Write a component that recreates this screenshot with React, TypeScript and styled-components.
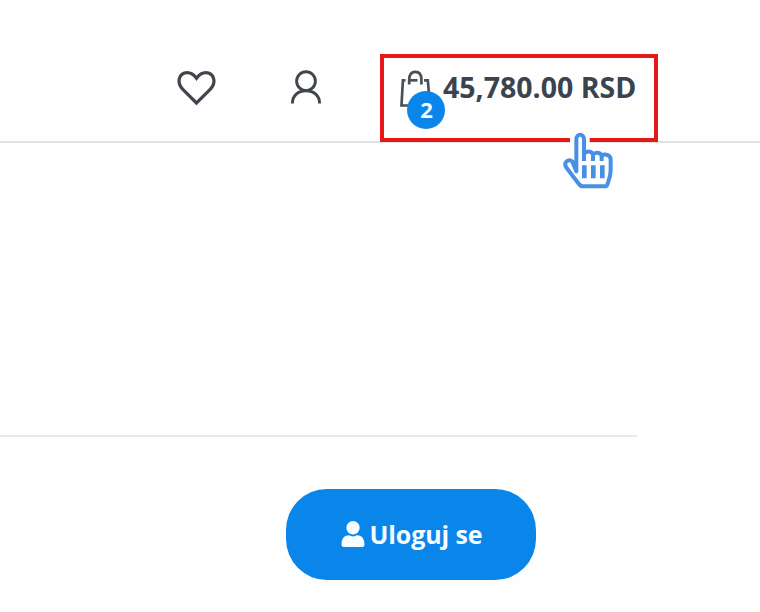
import React from 'react';
import styled, { createGlobalStyle } from 'styled-components';

const GlobalStyle = createGlobalStyle`
  body { margin: 0; background: #fefefe; font-family: "Open Sans", "Noto Sans", sans-serif; }
  * { box-sizing: border-box; }
`;

const Page = styled.div`
  width: 760px;
  height: 612px;
  overflow: hidden;
`;

const Header = styled.header`
  height: 143px;
  padding: 54px 102px 0 177px;
  display: flex;
  align-items: flex-start;
  border-bottom: 2px solid #e2e2e2;
`;

const IconLink = styled.a<{ $gap: number }>`
  display: block;
  margin: 15px ${(p) => p.$gap}px 0 0;
  height: 38px;
  svg { display: block; }
`;

const Cart = styled.div`
  position: relative;
  width: 278px;
  height: 88px;
  margin-left: auto;
  padding: 12px 0 0 16px;
  display: flex;
  align-items: flex-start;
  border: 4px solid #e61717;
  background: #fefefe;
`;

const BagIcon = styled.svg`
  flex: none;
  display: block;
`;

const Badge = styled.span`
  position: absolute;
  left: 23px;
  top: 33px;
  width: 38px;
  height: 38px;
  border-radius: 50%;
  background: #0a86ea;
  color: #f4fbff;
  font-size: 22px;
  font-weight: 700;
  line-height: 36px;
  padding-left: 1px;
  text-align: center;
`;

const Price = styled.strong`
  margin: -3px 0 0 11px;
  color: #3b434e;
  font-size: 28.5px;
  font-weight: 700;
  line-height: 40px;
  letter-spacing: 0;
  white-space: nowrap;
`;

const Pointer = styled.svg`
  position: absolute;
  left: 176px;
  top: 70px;
`;

const Content = styled.main`
  width: 637px;
  padding-top: 292px;
`;

const Divider = styled.hr`
  margin: 0;
  border: 0;
  height: 2px;
  background: #e9e9e9;
`;

const LoginButton = styled.button`
  display: flex;
  align-items: center;
  justify-content: center;
  width: 250px;
  height: 91px;
  margin: 52px 0 0 286px;
  padding: 0 0 1px 1px;
  gap: 5px;
  border: 0;
  border-radius: 41px;
  background: #0a86ea;
  color: #f6fcff;
  font: 700 25px/36px "Open Sans", "Noto Sans", sans-serif;
  letter-spacing: -0.1px;
`;

export default function App() {
  return (
    <Page>
      <GlobalStyle />
      <Header>
        <IconLink $gap={73}>
          <svg width="40" height="38" fill="none" stroke="#41464d" strokeWidth="3.2">
            <path d="M19.5 34 L6.3 20.8 C-1.5 13 2.6 3.6 10.2 3.6 C14.3 3.6 17 5.8 19.5 9.2 C22 5.8 24.7 3.6 28.8 3.6 C36.4 3.6 40.5 13 32.7 20.8 Z" />
          </svg>
        </IconLink>
        <IconLink $gap={0}>
          <svg width="34" height="38" fill="none" stroke="#41464d" strokeWidth="2.9">
            <circle cx="16" cy="12.2" r="9.4" />
            <path d="M2.4 34.5 C2.4 26.5 8.2 21.8 16 21.8 S29.6 26.5 29.6 34.5" />
          </svg>
        </IconLink>
        <Cart>
          <BagIcon width="32" height="38" fill="none" stroke="#4a5058" strokeWidth="2.7">
            <path d="M5.5 10.3 H2.9 L1.5 35.5 H10 M24 10.3 H27.8 L28.8 22" />
            <path d="M9.2 14.5 V9.5 C9.4 4 12 1.8 15.3 1.8 S21.4 4 21.4 9.5 V14.5" />
            <path d="M9.5 10.3 H17.5" />
          </BagIcon>
          <Badge>2</Badge>
          <Price>45,780.00 RSD</Price>
          <Pointer width="60" height="62" viewBox="150 240 180 186" fill="none">
            <path d="M180 264 V300 H239 V264Z" fill="#fefefe" />
            <g transform="translate(0 -9)">
              <path
                d="M199 379 V282 A11 12 0 0 1 222 282 V326 C230 316 245 317 249 329 C257 320 271 322 275 332 C287 325 302 330 302 344 V376 C302 395 295 409 292 419 Q290 424 284 424 H218 Q211 424 206 416 L170 369 C158 353 176 338 187 350 Z"
                fill="#fefefe"
                stroke="#4890e4"
                strokeWidth="12"
                strokeLinejoin="round"
              />
              <path d="M222 324 V348 M249 328 V348 M275 332 V348" stroke="#4890e4" strokeWidth="12" />
              <path d="M223 361 V400 M250 361 V400 M277 361 V400" stroke="#4890e4" strokeWidth="14" />
            </g>
          </Pointer>
        </Cart>
      </Header>
      <Content>
        <Divider />
        <LoginButton>
          <svg width="24" height="26" viewBox="0 0 24 26" fill="currentColor">
            <ellipse cx="12" cy="6.8" rx="6.7" ry="6.7" />
            <path d="M0.5 23.5 C0.5 17.5 3.5 14.3 8 14.3 Q12 16.5 16 14.3 C20.5 14.3 23.5 17.5 23.5 23.5 Q23.5 26 21 26 H3 Q0.5 26 0.5 23.5Z" />
          </svg>
          <span>Uloguj se</span>
        </LoginButton>
      </Content>
    </Page>
  );
}
